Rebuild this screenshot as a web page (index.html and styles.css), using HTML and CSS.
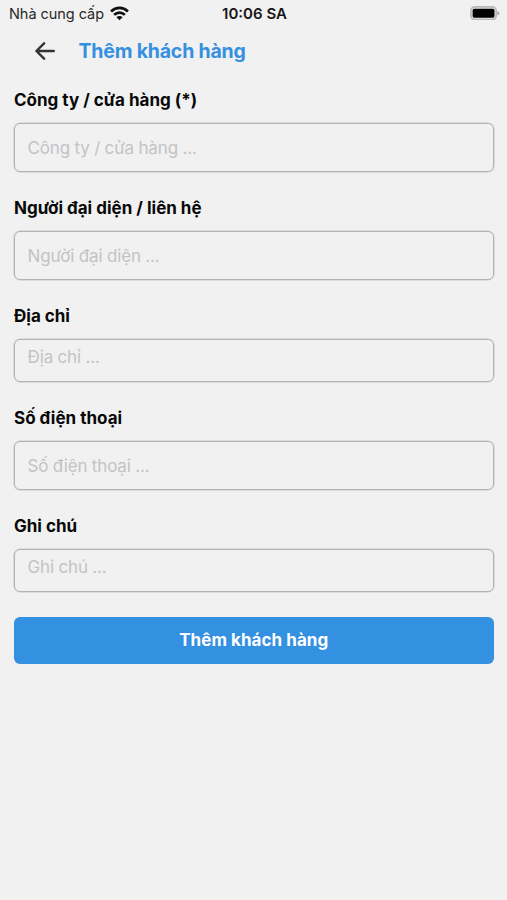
FILE: index.html
```html
<!DOCTYPE html>
<html lang="vi">
<head>
<meta charset="utf-8">
<title>Thêm khách hàng</title>
<link rel="stylesheet" href="styles.css">
</head>
<body>
<div class="status">
  <div class="carrier"><span>Nhà cung cấp</span>
    <svg class="wifi" viewBox="0 0 18 14" fill="none" stroke="#111" stroke-width="2.5"><path d="M1 5.1C5.6.6 12.4.6 17 5.1"/><path d="M3.9 8.3C6.8 5.5 11.2 5.5 14.1 8.3"/><path d="M9 13.4 6.1 10.6C7.6 9.1 10.4 9.1 11.9 10.6Z" fill="#111" stroke="none"/></svg>
  </div>
  <div class="time">10:06 SA</div>
  <svg class="battery" viewBox="0 0 31 15"><rect x=".9" y=".9" width="26.2" height="13.2" rx="4" fill="#e4e4e4" stroke="#b8b8b8" stroke-width="1.7"/><rect x="2.7" y="2.9" width="22.6" height="9.2" rx="1.7" fill="#000"/><path d="M28.3 5.1Q30.5 6 30.5 7.5T28.3 9.9Z" fill="#aaa"/></svg>
</div>
<header class="header">
  <svg class="back" viewBox="0 0 20 18" fill="none" stroke="#333" stroke-width="2.4" stroke-linecap="round" stroke-linejoin="round"><path d="M9.1 1.3 1.4 9l7.7 7.7M1.6 9h17.2"/></svg>
  <h1>Thêm khách hàng</h1>
</header>
<form class="form">
  <label for="company">Công ty / cửa hàng (*)</label>
  <input class="field" id="company" placeholder="Công ty / cửa hàng ...">
  <label for="contact">Người đại diện / liên hệ</label>
  <input class="field" id="contact" placeholder="Người đại diện ...">
  <label for="address">Địa chỉ</label>
  <textarea class="field area" id="address" placeholder="Địa chỉ ..."></textarea>
  <label for="phone">Số điện thoại</label>
  <input class="field" id="phone" placeholder="Số điện thoại ...">
  <label for="note">Ghi chú</label>
  <textarea class="field area" id="note" placeholder="Ghi chú ..."></textarea>
  <button type="button">Thêm khách hàng</button>
</form>
</body>
</html>
```
FILE: styles.css
```css
* { box-sizing: border-box; }
body { margin: 0; min-height: 100vh; background: #f1f1f1; color: #080808; font-family: Inter, "Noto Sans", sans-serif; }
.status { height: 28px; padding: 0 7px 1px 9px; display: grid; grid-template-columns: 1fr auto 1fr; align-items: center; }
.carrier { display: flex; align-items: center; gap: 6px; font-size: 14.5px; letter-spacing: -.05px; color: #292929; white-space: nowrap; }
.wifi { width: 19px; height: 15px; margin-top: -1px; }
.time { font-size: 15px; font-weight: 600; color: #161616; }
.battery { width: 30px; height: 14.5px; justify-self: end; margin-top: -1px; }
.header { height: 60px; padding: 0 34px 14px 35px; display: flex; align-items: center; gap: 23.5px; }
.back { width: 20px; height: 18px; }
h1 { margin: 0; font-size: 19.5px; line-height: 28px; font-weight: 700; letter-spacing: -.2px; color: #3690e0; }
.form { padding: 0 13px 0 13.5px; display: flex; flex-direction: column; }
label { height: 24px; margin-bottom: 11px; padding-left: .5px; line-height: 24px; font-size: 17px; font-weight: 700; letter-spacing: 0; }
.field { display: block; width: 100%; height: 49px; margin: 0 0 24px; padding: 0 13px; border: 1px solid #b2b2b2; border-radius: 6px; box-shadow: 0 0 0 .5px #c8c8c8; background: transparent; font: 400 17px/22px Inter, "Noto Sans", sans-serif; letter-spacing: -.13px; word-spacing: -.2px; color: #111; outline: none; resize: none; overflow: hidden; }
.area { height: 43px; padding-top: 6px; }
.field::placeholder { color: #c3c3c5; opacity: 1; }
button { height: 47px; margin-top: 1px; padding: 0 0 1px; border: 0; border-radius: 6px; background: #3490e0; color: #fff; font: 700 17px/24px Inter, "Noto Sans", sans-serif; letter-spacing: .05px; }
```
